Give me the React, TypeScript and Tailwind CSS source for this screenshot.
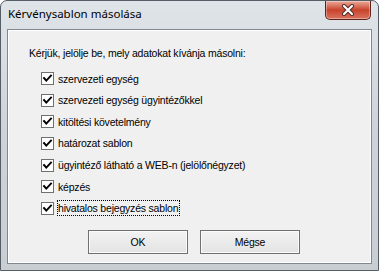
import React from "react";

const ITEMS = [
  "szervezeti egység",
  "szervezeti egység ügyintézőkkel",
  "kitöltési követelmény",
  "határozat sablon",
  "ügyintéző látható a WEB-n (jelölőnégyzet)",
  "képzés",
  "hivatalos bejegyzés sablon",
];

function CheckBox() {
  return (
    <span className="flex h-[13px] w-[13px] shrink-0 items-center justify-center border border-[#707070] bg-white">
      <svg width="11" height="11" viewBox="0 0 11 11">
        <polyline
          points="2,5 4.3,7.6 9,2.6"
          fill="none"
          stroke="#000"
          strokeWidth="1.9"
          strokeLinecap="square"
        />
      </svg>
    </span>
  );
}

function CloseButton() {
  return (
    <div className="absolute right-[7px] top-0 flex h-[19px] w-[46px] items-center justify-center rounded-b-[5px] border border-t-0 border-[#5e231b] bg-gradient-to-b from-[#e8a99a] via-[#c8422b] to-[#d9735f] shadow-[inset_0_0_0_1px_rgba(255,255,255,0.35)]">
      <svg width="14" height="12" viewBox="0 0 14 12">
        <path d="M3 2 L11 10 M11 2 L3 10" stroke="#4a2a26" strokeWidth="4" strokeLinecap="round" />
        <path d="M3 2 L11 10 M11 2 L3 10" stroke="#fff" strokeWidth="2.2" strokeLinecap="round" />
      </svg>
    </div>
  );
}

export default function App() {
  return (
    <div className="h-[271px] w-[379px] bg-white">
      <div className="relative flex h-full w-full flex-col rounded-t-[7px] border border-[#555d66] bg-gradient-to-b from-[#dfe4e8] via-[#cdd3d8] to-[#c9ced3]">
        <div className="flex h-[28px] shrink-0 items-start pl-[7px] pt-[5px]">
          <span className="text-[11.5px] leading-[16px] text-black [font-family:'Noto_Sans',sans-serif]">
            Kérvénysablon másolása
          </span>
        </div>
        <CloseButton />
        <div className="mx-[6px] mb-[6px] flex flex-1 flex-col border border-[#7f8790] bg-[#f0f0f0] shadow-[inset_0_0_0_1px_#ffffff] [font-family:'Liberation_Sans',Arial,sans-serif] text-[10.5px] leading-[14px] tracking-[-0.2px] text-black">
          <p className="pl-[21px] pt-[16px]">Kérjük, jelölje be, mely adatokat kívánja másolni:</p>
          <div className="mt-[12px] flex flex-col gap-[8.67px] pl-[33px]">
            {ITEMS.map((item, i) => (
              <div key={item} className="flex h-[13px] items-center gap-[3px]">
                <CheckBox />
                <span
                  className={
                    i === ITEMS.length - 1
                      ? "border border-dotted border-black pr-[1px]"
                      : "border border-transparent"
                  }
                >
                  {item}
                </span>
              </div>
            ))}
          </div>
          <div className="mt-[15px] flex gap-[12px] pl-[80px]">
            {["OK", "Mégse"].map((label) => (
              <button
                key={label}
                className="flex h-[24px] w-[100px] items-center justify-center border border-[#707070] bg-gradient-to-b from-[#f2f2f2] to-[#e4e4e4] shadow-[inset_0_0_0_1px_#fbfbfb] text-[10.5px]"
              >
                {label}
              </button>
            ))}
          </div>
        </div>
      </div>
    </div>
  );
}
